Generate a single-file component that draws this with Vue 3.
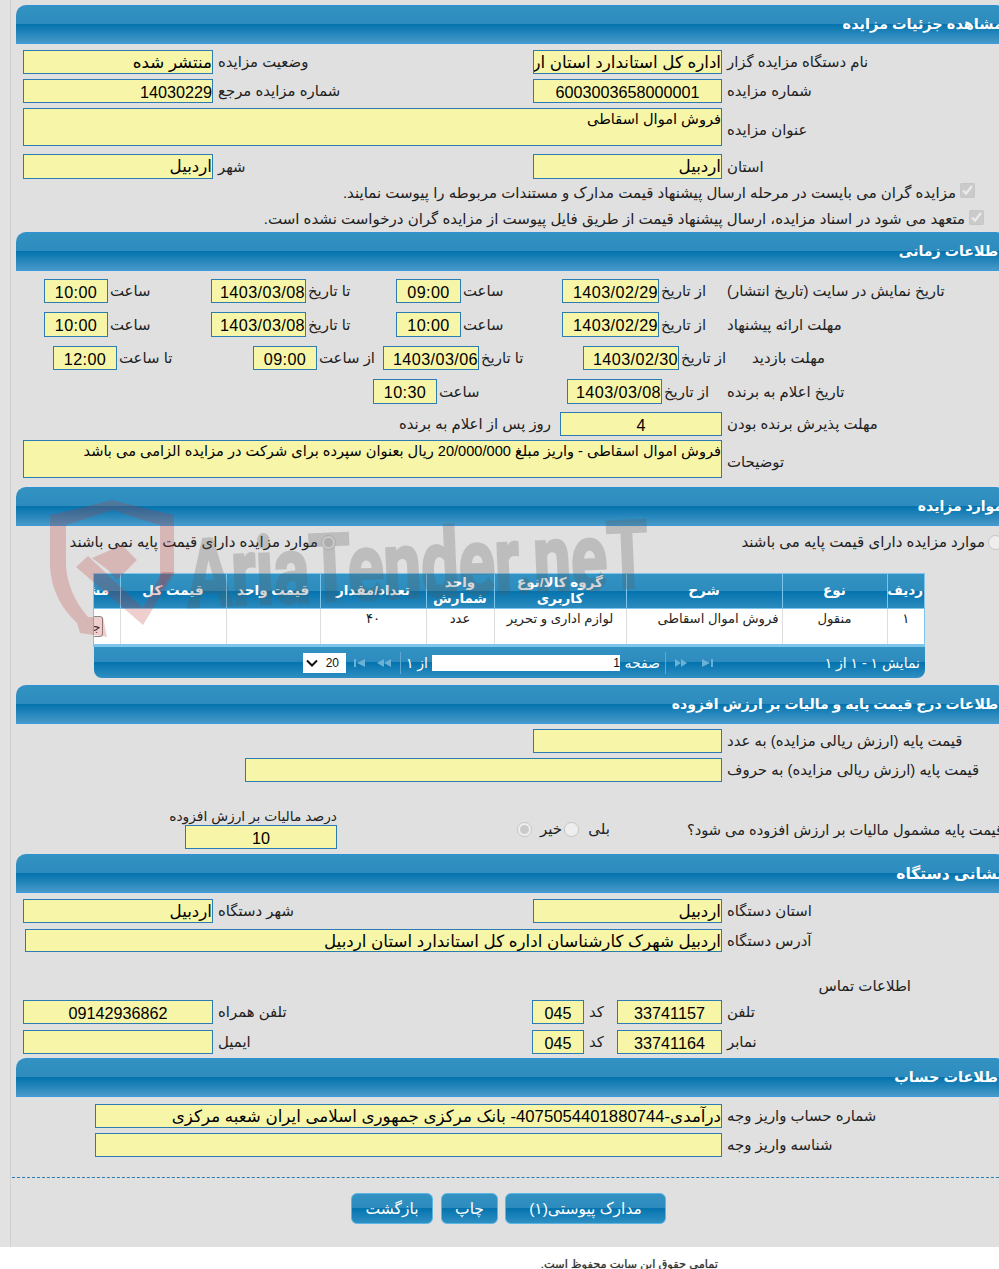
<script setup>
const columns = [
  { key: 'row', title: 'ردیف', width: 37, value: '۱' },
  { key: 'type', title: 'نوع', width: 105, value: 'منقول' },
  { key: 'desc', title: 'شرح', width: 156, value: 'فروش اموال اسقاطی', start: true },
  { key: 'group', title: 'گروه کالا/نوع کاربری', width: 132, value: 'لوازم اداری و تحریر' },
  { key: 'unit', title: 'واحد شمارش', width: 68, value: 'عدد' },
  { key: 'qty', title: 'تعداد/مقدار', width: 106, value: '۴۰' },
  { key: 'price', title: 'قیمت واحد', width: 94, value: '' },
  { key: 'total', title: 'قیمت کل', width: 106, value: '' },
  { key: 'view', title: 'مشاهده', width: 74, value: '', button: true }
]
</script>

<template>
  <div class="page">
    <div class="strip">
      <main class="main">
        <h2 class="head">مشاهده جزئیات مزایده</h2>
        <section class="body b1">
          <div class="row two">
            <div class="field">منتشر شده</div>
            <label class="lab">وضعیت مزایده</label>
            <div class="field">اداره کل استاندارد استان اردبیل</div>
            <label class="lab">نام دستگاه مزایده گزار</label>
          </div>
          <div class="row two mt5">
            <div class="field num">14030229</div>
            <label class="lab">شماره مزایده مرجع</label>
            <div class="field num center">6003003658000001</div>
            <label class="lab">شماره مزایده</label>
          </div>
          <div class="row wide mt5">
            <div class="field area small">فروش اموال اسقاطی</div>
            <label class="lab low">عنوان مزایده</label>
          </div>
          <div class="row two mt8">
            <div class="field h25">اردبیل</div>
            <label class="lab">شهر</label>
            <div class="field h25">اردبیل</div>
            <label class="lab">استان</label>
          </div>
          <div class="check c1"><input type="checkbox" checked disabled /><span>مزایده گران می بایست در مرحله ارسال پیشنهاد قیمت مدارک و مستندات مربوطه را پیوست نمایند.</span></div>
          <div class="check c2"><input type="checkbox" checked disabled /><span>متعهد می شود در اسناد مزایده، ارسال پیشنهاد قیمت از طریق فایل پیوست از مزایده گران درخواست نشده است.</span></div>
        </section>

        <h2 class="head h-time">اطلاعات زمانی</h2>
        <section class="body b2">
          <div class="row t1">
            <i></i>
            <div class="field num time center">10:00</div>
            <label class="lab p2">ساعت</label>
            <div class="field num time">1403/03/08</div>
            <label class="lab p2">تا تاریخ</label>
            <div class="field num time center">09:00</div>
            <label class="lab p2">ساعت</label>
            <div class="field num time">1403/02/29</div>
            <label class="lab p2">از تاریخ</label>
            <label class="lab p0">تاریخ نمایش در سایت (تاریخ انتشار)</label>
          </div>
          <div class="row t1 mt9">
            <i></i>
            <div class="field h25 num time center">10:00</div>
            <label class="lab p2">ساعت</label>
            <div class="field h25 num time">1403/03/08</div>
            <label class="lab p2">تا تاریخ</label>
            <div class="field h25 num time center">10:00</div>
            <label class="lab p2">ساعت</label>
            <div class="field h25 num time">1403/02/29</div>
            <label class="lab p2">از تاریخ</label>
            <label class="lab p0">مهلت ارائه پیشنهاد</label>
          </div>
          <div class="row t3 mt9">
            <i></i>
            <div class="field num time center">12:00</div>
            <label class="lab p2">تا ساعت</label>
            <div class="field num time center">09:00</div>
            <label class="lab p2">از ساعت</label>
            <div class="field num time">1403/03/06</div>
            <label class="lab p2">تا تاریخ</label>
            <div class="field num time">1403/02/30</div>
            <label class="lab p2">از تاریخ</label>
            <label class="lab p25">مهلت بازدید</label>
          </div>
          <div class="row t4 mt9">
            <i></i>
            <div class="field h25 num time center">10:30</div>
            <label class="lab p2">ساعت</label>
            <div class="field h25 num time">1403/03/08</div>
            <label class="lab p2">از تاریخ</label>
            <label class="lab p0">تاریخ اعلام به برنده</label>
          </div>
          <div class="row t5 mt8">
            <label class="lab end">روز پس از اعلام به برنده</label>
            <div class="field num center">4</div>
            <label class="lab">مهلت پذیرش برنده بودن</label>
          </div>
          <div class="row wide mt4">
            <div class="field area small">فروش اموال اسقاطی - واریز مبلغ 20/000/000 ریال بعنوان سپرده برای شرکت در مزایده الزامی می باشد</div>
            <label class="lab low">توضیحات</label>
          </div>
        </section>

        <h2 class="head h-items">موارد مزایده</h2>
        <section class="body b3">
          <div class="radios">
            <div class="opt"><input type="radio" name="base" checked disabled /><span>موارد مزایده دارای قیمت پایه نمی باشند</span></div>
            <div class="opt"><input type="radio" name="base" disabled /><span>موارد مزایده دارای قیمت پایه می باشند</span></div>
          </div>
          <div class="table-wrap">
            <table class="table">
              <colgroup><col v-for="c in columns" :key="c.key" :style="{ width: c.width + 'px' }" /></colgroup>
              <thead><tr><th v-for="c in columns" :key="c.key">{{ c.title }}</th></tr></thead>
              <tbody>
                <tr>
                  <td v-for="c in columns" :key="c.key" :class="{ start: c.start }">
                    <button v-if="c.button" class="detail" type="button">جزئیات</button>
                    <template v-else>{{ c.value }}</template>
                  </td>
                </tr>
              </tbody>
            </table>
          </div>
          <div class="pager">
            <span class="p-info">نمایش ۱ - ۱ از ۱</span>
            <svg class="p-ico first" width="42" height="12" viewBox="0 0 42 12">
              <g fill="#6db0d6">
                <polygon points="1,2 7,6 1,10" /><polygon points="7,2 13,6 7,10" />
                <polygon points="28,2 36,6 28,10" /><rect x="37" y="2" width="2" height="8" />
              </g>
            </svg>
            <b class="sep s1"></b>
            <span class="p-word">صفحه</span>
            <div class="p-input">1</div>
            <span class="p-of">از ۱</span>
            <b class="sep s2"></b>
            <svg class="p-ico last" width="42" height="12" viewBox="0 0 42 12">
              <g fill="#6db0d6">
                <rect x="4" y="2" width="2" height="8" /><polygon points="15,2 7,6 15,10" />
                <polygon points="34,2 27,6 34,10" /><polygon points="41,2 34,6 41,10" />
              </g>
            </svg>
            <div class="p-select">
              <span>20</span>
              <svg width="12" height="8" viewBox="0 0 12 8"><path d="M1 1.5 6 6.5 11 1.5" fill="none" stroke="#111" stroke-width="2" /></svg>
            </div>
          </div>
        </section>

        <h2 class="head h-price">اطلاعات درج قیمت پایه و مالیات بر ارزش افزوده</h2>
        <section class="body b4">
          <div class="row one">
            <i></i>
            <div class="field"></div>
            <label class="lab">قیمت پایه (ارزش ریالی مزایده) به عدد</label>
          </div>
          <div class="row words mt5">
            <i></i>
            <div class="field"></div>
            <label class="lab">قیمت پایه (ارزش ریالی مزایده) به حروف</label>
          </div>
          <div class="tax">
            <div class="tax-rate">
              <label class="tax-label">درصد مالیات بر ارزش افزوده</label>
              <div class="field num center">10</div>
            </div>
            <div class="tax-q">
              <span class="q">قیمت پایه مشمول مالیات بر ارزش افزوده می شود؟</span>
              <span class="yes">بلی</span><input type="radio" name="tax" disabled />
              <span class="no">خیر</span><input type="radio" name="tax" checked disabled />
            </div>
          </div>
        </section>

        <h2 class="head h-addr">نشانی دستگاه</h2>
        <section class="body b5">
          <div class="row two">
            <div class="field">اردبیل</div>
            <label class="lab">شهر دستگاه</label>
            <div class="field">اردبیل</div>
            <label class="lab">استان دستگاه</label>
          </div>
          <div class="row addr mt6">
            <i></i>
            <div class="field h23">اردبیل شهرک کارشناسان اداره کل استاندارد استان اردبیل</div>
            <label class="lab">آدرس دستگاه</label>
          </div>
          <div class="contact-title">اطلاعات تماس</div>
          <div class="row phones">
            <div class="field num center">09142936862</div>
            <label class="lab">تلفن همراه</label>
            <div class="field num center">045</div>
            <label class="lab">کد</label>
            <div class="field num center">33741157</div>
            <label class="lab">تلفن</label>
          </div>
          <div class="row phones mt6">
            <div class="field"></div>
            <label class="lab">ایمیل</label>
            <div class="field num center">045</div>
            <label class="lab">کد</label>
            <div class="field num center">33741164</div>
            <label class="lab">نمابر</label>
          </div>
        </section>

        <h2 class="head">اطلاعات حساب</h2>
        <section class="body b6">
          <div class="row account">
            <i></i>
            <div class="field">درآمدی-4075054401880744- بانک مرکزی جمهوری اسلامی ایران شعبه مرکزی</div>
            <label class="lab">شماره حساب واریز وجه</label>
          </div>
          <div class="row account mt5">
            <i></i>
            <div class="field"></div>
            <label class="lab">شناسه واریز وجه</label>
          </div>
        </section>

        <div class="actions">
          <button class="btn back" type="button">بازگشت</button>
          <button class="btn print" type="button">چاپ</button>
          <button class="btn docs" type="button">مدارک پیوستی(۱)</button>
        </div>
      </main>
    </div>
    <footer class="foot">تمامی حقوق این سایت محفوظ است.</footer>

    <svg class="mark" width="999" height="660" viewBox="0 0 999 660" aria-hidden="true">
      <g fill="rgb(190,50,50)" fill-opacity="0.24">
        <path d="M50 515 Q82 508 112 500 Q143 508 174 515 L174 572 L160 590 L160 525 Q135 518 113 510 Q88 518 66 525 L66 566 Q68 594 88 617 L103 617 L107 637 L80 633 L77 623 Q52 600 50 567 Z" />
        <path d="M76 567 L88 556 L143 608 L162 572 L175 572 L143 625 Z" />
        <path d="M92 558 L122 545 L137 560 L117 580 L108 570 Z" />
      </g>
      <g opacity="0.25">
        <text x="188" y="607" transform="rotate(-2.5 188 607)" textLength="462" lengthAdjust="spacingAndGlyphs" class="mark-text">AriaTender.neT</text>
      </g>
    </svg>
  </div>
</template>

<style>
html, body { margin: 0; background: #fff; }
</style>

<style scoped>
.page {
  position: relative;
  width: 999px;
  height: 1269px;
  overflow: hidden;
  background: #fff;
  color: #111;
  font-family: "Liberation Sans", "DejaVu Sans", sans-serif;
  font-size: 15px;
}
.strip { background: #e2e2e2; padding-left: 10px; }
.main { background: #e0e0e0; border-left: 1px solid #cfcfcf; padding-top: 5px; padding-bottom: 23px; width: 988px; }
.head {
  box-sizing: border-box;
  width: 990px;
  height: 39px;
  margin: 0 0 0 5px;
  padding: 0 3px 0 0;
  direction: rtl;
  line-height: 37px;
  color: #fff;
  font-size: 14.5px;
  font-weight: bold;
  white-space: nowrap;
  border-top: 1px solid #2d90d2;
  border-bottom: 1px solid #3c9bdc;
  border-radius: 10px 10px 0 0;
  background: linear-gradient(#3292c2 0, #2d8cbd 49%, #0473ae 50%, #4799c8 100%);
}
.h-time { font-size: 14.2px; }
.h-items { font-size: 14px; }
.h-price { font-size: 14px; }
.h-addr { font-size: 15.5px; }
.body { padding-left: 12px; }
.b1 { padding-top: 6px; }
.b2 { padding-top: 8px; padding-bottom: 9px; }
.b3 { padding-top: 7px; padding-bottom: 7px; }
.b4 { padding-top: 5px; padding-bottom: 5px; }
.b5 { padding-top: 6px; padding-bottom: 4px; }
.b6 { padding-top: 7px; }

.row { display: grid; align-items: center; width: 976px; }
.two { grid-template-columns: 190px 320px 189px 1fr; }
.wide { grid-template-columns: 699px 1fr; }
.one { grid-template-columns: 510px 189px 1fr; }
.words { grid-template-columns: 222px 477px 1fr; }
.addr { grid-template-columns: 2px 697px 1fr; }
.account { grid-template-columns: 72px 627px 1fr; }
.phones { grid-template-columns: 190px 319px 52px 33px 105px 1fr; }
.t1 { grid-template-columns: 21px 64px 103px 95px 90px 65px 101px 97px 68px 1fr; }
.t3 { grid-template-columns: 30px 64px 136px 64px 66px 96px 104px 96px 48px 1fr; }
.t4 { grid-template-columns: 350px 64px 130px 95px 65px 1fr; }
.t5 { grid-template-columns: 537px 162px 1fr; }
.mt4 { margin-top: 4px; }
.mt5 { margin-top: 5px; }
.mt6 { margin-top: 6px; }
.mt8 { margin-top: 8px; }
.mt9 { margin-top: 9px; }

.field {
  box-sizing: border-box;
  height: 24px;
  line-height: 24px;
  border: 1px solid #2a7cb2;
  background: #f7f5a7;
  direction: rtl;
  font-size: 16.7px;
  white-space: nowrap;
  overflow: hidden;
  color: #000;
}
.num { font-size: 16.2px; }
.time { letter-spacing: 0.4px; }
.center { text-align: center; }
.h25 { height: 25px; }
.h23 { height: 23px; }
.area { height: 38px; line-height: 21px; white-space: normal; }
.small { font-size: 14.6px; }
.lab { direction: rtl; text-align: left; padding-left: 5px; white-space: nowrap; font-size: 14.9px; color: #222; }
.p0 { padding-left: 0; }
.p2 { padding-left: 2px; }
.p25 { padding-left: 25px; }
.low { padding-top: 5px; }
.end { text-align: right; padding: 0 9px 0 0; }

.check { display: flex; direction: rtl; align-items: center; height: 26px; font-size: 15px; color: #222; }
.c1 { height: 27px; padding-right: 24px; }
.c2 { padding-right: 15px; }
.check input { width: 15px; height: 15px; margin: 0 0 4px 4px; }

.radios { display: grid; grid-template-columns: 313px 1fr; width: 980px; height: 17px; align-items: center; }
.opt { display: flex; direction: rtl; align-items: center; color: #222; white-space: nowrap; }
.opt input { width: 15px; height: 15px; margin: 0 0 0 3px; }

.table-wrap {
  box-sizing: border-box;
  width: 832px;
  height: 74px;
  margin: 23px 0 0 70px;
  direction: rtl;
  overflow: hidden;
  background: #fff;
  border: 1px solid #7fc4ea;
  border-bottom-width: 3px;
}
.table { border-collapse: collapse; table-layout: fixed; width: 878px; }
.table th {
  height: 34px;
  padding: 0 1px;
  color: #fff;
  font-size: 13.5px;
  line-height: 16px;
  font-weight: bold;
  border-left: 1px solid #7cc6ee;
  border-bottom: 1px solid #7cc6ee;
  background: linear-gradient(#3292c2 0, #2d8cbd 49%, #0473ae 50%, #2b8abd 100%);
}
.table td {
  height: 35px;
  padding: 2px 3px 0;
  box-sizing: border-box;
  vertical-align: top;
  text-align: center;
  font-size: 13.2px;
  color: #222;
  border-left: 1px solid #ddd;
}
.table td.start { text-align: right; }
.detail {
  display: block;
  box-sizing: border-box;
  width: 40px;
  height: 21px;
  margin: 5px 14px 0 0;
  padding: 0;
  font: 12px "Liberation Sans", "DejaVu Sans", sans-serif;
  color: #222;
  background: #fff;
  border: 1px solid #888;
  border-radius: 3px;
}
.pager {
  display: flex;
  direction: rtl;
  align-items: center;
  box-sizing: border-box;
  width: 831px;
  height: 31px;
  margin: 0 0 0 71px;
  padding-right: 5px;
  color: #fff;
  font-size: 14px;
  white-space: nowrap;
  border-radius: 0 0 8px 8px;
  background: linear-gradient(#3292c2 0, #2d8cbd 49%, #0473ae 50%, #2f8fc2 100%);
}
.p-info { flex: none; width: 97px; }
.p-ico { flex: none; }
.first { margin-right: 107px; }
.sep { flex: none; width: 1px; height: 22px; background: #5da9d2; }
.s1 { margin-right: 8px; }
.p-word { flex: none; width: 35px; margin-right: 5px; }
.p-input {
  flex: none;
  box-sizing: border-box;
  width: 188px;
  height: 16px;
  margin-right: 5px;
  line-height: 16px;
  background: #fff;
  color: #111;
  font-size: 12px;
}
.p-of { flex: none; width: 21px; margin-right: 4px; }
.s2 { margin-right: 6px; }
.last { margin-right: 8px; }
.p-select {
  display: flex;
  direction: ltr;
  align-items: center;
  flex-direction: row-reverse;
  justify-content: space-between;
  flex: none;
  box-sizing: border-box;
  width: 43px;
  height: 20px;
  margin-right: 4px;
  padding: 0 7px 0 3px;
  background: #fff;
  color: #111;
  font-size: 12px;
}

.tax { display: flex; width: 980px; margin-top: 24px; align-items: flex-start; }
.tax-rate { width: 314px; flex: none; display: flex; flex-direction: column; align-items: flex-end; }
.tax-label { height: 19px; line-height: 21px; direction: rtl; white-space: nowrap; color: #222; font-size: 13.8px; }
.tax-rate .field { width: 152px; }
.tax-q { flex: 1; display: flex; direction: rtl; align-items: center; height: 20px; margin-top: 13px; white-space: nowrap; color: #222; }
.tax-q input { width: 15px; height: 15px; margin: 0; flex: none; }
.q { flex: none; width: 317px; font-size: 14.6px; overflow: hidden; }
.yes { width: 24px; margin-right: 76px; margin-left: 7px; }
.no { width: 22px; margin-right: 2px; margin-left: 8px; }

.contact-title { direction: rtl; height: 20px; margin: 24px 0 4px; padding-right: 88px; width: 888px; line-height: 20px; color: #222; }

.actions {
  display: flex;
  gap: 7px;
  margin: 20px 0 0 1px;
  padding: 15px 0 0 339px;
  border-top: 1px dashed #2a7cb2;
}
.btn {
  box-sizing: border-box;
  height: 31px;
  padding: 0;
  direction: rtl;
  color: #fff;
  font: 15.5px "Liberation Sans", "DejaVu Sans", sans-serif;
  border: 1px solid #5bb6e6;
  border-radius: 6px;
  background: linear-gradient(#3292c2 0, #2d8cbd 49%, #0473ae 50%, #2f8fc2 100%);
}
.back { width: 82px; margin-right: 1px; }
.print { width: 57px; }
.docs { width: 161px; }

.foot {
  direction: rtl;
  width: 718px;
  height: 22px;
  line-height: 34px;
  font-size: 11.4px;
  color: #333;
  text-shadow: 0 0 1px #777;
  white-space: nowrap;
}

.mark { position: absolute; left: 0; top: 0; pointer-events: none; }
.mark-text {
  font-family: Roboto, "Liberation Sans", sans-serif;
  font-size: 94px;
  font-weight: 700;
  fill: #5a5a5a;
  stroke: #5a5a5a;
  stroke-width: 3px;
}
</style>
